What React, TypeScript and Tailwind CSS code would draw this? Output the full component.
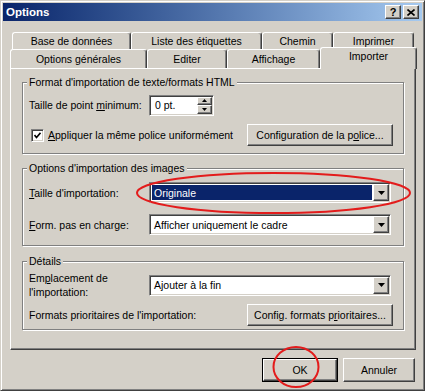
import React from "react";

const raised =
  "border border-t-white border-l-white border-r-[#404040] border-b-[#404040] shadow-[inset_-1px_-1px_0_#808080]";
const sunken =
  "border border-t-[#808080] border-l-[#808080] border-r-white border-b-white shadow-[inset_1px_1px_0_#404040,inset_-1px_-1px_0_#d4d0c8]";

function Arrow() {
  return (
    <svg width="7" height="4" viewBox="0 0 7 4">
      <polygon points="0,0 7,0 3.5,4" fill="#000" />
    </svg>
  );
}

function Select({ value, highlighted }: { value: string; highlighted?: boolean }) {
  return (
    <div className={`flex h-[21px] w-[242px] bg-white p-[1px] ${sunken}`}>
      <div
        className={`m-[1px] flex flex-1 items-center pl-[2px] ${
          highlighted ? "bg-[#0a246a] text-white" : "text-black"
        }`}
      >
        {value}
      </div>
      <div className={`flex h-full w-[16px] items-center justify-center bg-[#d4d0c8] ${raised}`}>
        <Arrow />
      </div>
    </div>
  );
}

function Button({ children, className }: { children: React.ReactNode; className?: string }) {
  return (
    <div className={`flex h-[22px] items-center justify-center bg-[#d4d0c8] text-black ${raised} ${className ?? ""}`}>
      {children}
    </div>
  );
}

function Tab({ label, w }: { label: string; w: string }) {
  return (
    <div
      className={`flex items-center justify-center rounded-t-[3px] border-l border-t border-r border-l-white border-t-white border-r-[#404040] shadow-[inset_-1px_0_0_#808080] bg-[#d4d0c8] ${w}`}
    >
      {label}
    </div>
  );
}

function Group({ legend, children, className }: { legend: string; children: React.ReactNode; className?: string }) {
  return (
    <fieldset
      className={`border border-[#808080] shadow-[1px_1px_0_#fff,inset_1px_1px_0_#fff] pl-[6px] pr-[10px] ${className ?? ""}`}
    >
      <legend className="bg-[#d4d0c8] px-[2px] -ml-[2px] leading-[12px]">{legend}</legend>
      {children}
    </fieldset>
  );
}

export default function App() {
  return (
    <div className="relative h-[391px] w-[425px] overflow-hidden font-['Liberation_Sans',Arial,sans-serif] text-[10.5px] leading-[12px] text-black">
      <div className="flex h-full w-full flex-col border border-t-[#d4d0c8] border-l-[#d4d0c8] border-r-[#404040] border-b-[#404040] bg-[#d4d0c8] p-[2px] shadow-[inset_1px_1px_0_#fff,inset_-1px_-1px_0_#808080]">
        {/* Title bar */}
        <div className="flex h-[18px] shrink-0 items-center bg-linear-to-r from-[#0a246a] to-[#a6caf0] pl-[3px] pr-[3px]">
          <span className="flex-1 text-[11.5px] font-bold text-white">Options</span>
          <div className={`mr-[2px] flex h-[14px] w-[16px] items-center justify-center bg-[#d4d0c8] text-[11px] font-bold leading-none ${raised}`}>
            ?
          </div>
          <div className={`flex h-[14px] w-[16px] items-center justify-center bg-[#d4d0c8] ${raised}`}>
            <svg width="8" height="7" viewBox="0 0 8 7">
              <path d="M0.5 0.5 L7.5 6.5 M7.5 0.5 L0.5 6.5" stroke="#000" strokeWidth="1.6" />
            </svg>
          </div>
        </div>

        {/* Tabs row 1 */}
        <div className="ml-[9px] mt-[11px] flex h-[17px] shrink-0">
          <Tab label="Base de données" w="w-[119px]" />
          <Tab label="Liste des étiquettes" w="w-[131px]" />
          <Tab label="Chemin" w="w-[71px]" />
          <Tab label="Imprimer" w="w-[81px]" />
        </div>
        {/* Tabs row 2 */}
        <div className="relative z-10 ml-[7px] -mt-[2px] flex h-[21px] shrink-0 items-end">
          <Tab label="Options générales" w="w-[137px] h-[19px]" />
          <Tab label="Editer" w="w-[80px] h-[19px]" />
          <Tab label="Affichage" w="w-[93px] h-[19px]" />
          <div className="-mb-[1px] flex h-[22px] w-[97px] items-start justify-center rounded-t-[3px] border-l border-t border-r border-l-white border-t-white border-r-[#404040] bg-[#d4d0c8] pt-[2px] shadow-[inset_-1px_0_0_#808080]">
            Importer
          </div>
        </div>

        {/* Panel */}
        <div className="ml-[7px] flex h-[282px] w-[406px] shrink-0 flex-col border border-t-white border-l-white border-r-[#404040] border-b-[#404040] px-[11px] pt-[7px] shadow-[inset_-1px_-1px_0_#808080]">
          <Group legend="Format d'importation de texte/formats HTML" className="pb-[7px] pt-[6px]">
            <div className="flex h-[22px] items-center">
              <span className="w-[120px]">
                Taille de point <u>m</u>inimum:
              </span>
              <div className={`flex h-[21px] w-[65px] bg-white p-[1px] ${sunken}`}>
                <div className="flex flex-1 items-center pl-[4px]">0 pt.</div>
                <div className="flex w-[15px] flex-col">
                  <div className={`flex flex-1 items-center justify-center bg-[#d4d0c8] ${raised}`}>
                    <svg width="5" height="3" viewBox="0 0 5 3">
                      <polygon points="2.5,0 5,3 0,3" fill="#000" />
                    </svg>
                  </div>
                  <div className={`flex flex-1 items-center justify-center bg-[#d4d0c8] ${raised}`}>
                    <svg width="5" height="3" viewBox="0 0 5 3">
                      <polygon points="0,0 5,0 2.5,3" fill="#000" />
                    </svg>
                  </div>
                </div>
              </div>
            </div>
            <div className="mt-[8px] flex h-[22px] items-center">
              <div className={`ml-[2px] flex h-[13px] w-[13px] items-center justify-center bg-white ${sunken}`}>
                <svg width="7" height="7" viewBox="0 0 7 7">
                  <path d="M0.5 3 L2.5 5.5 L6.5 0.8" stroke="#000" strokeWidth="1.6" fill="none" />
                </svg>
              </div>
              <span className="ml-[4px] flex-1">
                <u>A</u>ppliquer la même police uniformément
              </span>
              <Button className="w-[146px]">
                Configuration de la p<u>o</u>lice...
              </Button>
            </div>
          </Group>

          <Group legend="Options d'importation des images" className="mt-[8px] pb-[10px] pt-[8px]">
            <div className="flex h-[21px] items-center">
              <span className="w-[120px]">
                <u>T</u>aille d'importation:
              </span>
              <Select value="Originale" highlighted />
            </div>
            <div className="mt-[11px] flex h-[21px] items-center">
              <span className="w-[120px]">
                <u>F</u>orm. pas en charge:
              </span>
              <Select value="Afficher uniquement le cadre" />
            </div>
          </Group>

          <Group legend="Détails" className="mt-[9px] pb-[3px] pt-[4px]">
            <div className="flex h-[28px] items-center">
              <span className="w-[120px] leading-[14px]">
                Em<u>p</u>lacement de
                <br />
                l'importation:
              </span>
              <Select value="Ajouter à la fin" />
            </div>
            <div className="mt-[5px] flex h-[22px] items-center">
              <span className="flex-1">Formats prioritaires de l'importation:</span>
              <Button className="w-[146px]">
                Config. formats p<u>r</u>ioritaires...
              </Button>
            </div>
          </Group>
        </div>

        {/* Bottom buttons */}
        <div className="mt-[8px] flex justify-end gap-[5px] pr-[7px]">
          <div className="border border-black">
            <Button className="h-[22px] w-[74px]">OK</Button>
          </div>
          <Button className="h-[24px] w-[72px]">Annuler</Button>
        </div>
      </div>

      {/* Red annotation ellipses */}
      <svg className="pointer-events-none absolute left-0 top-0" width="425" height="391">
        <ellipse cx="273.5" cy="193" rx="136.5" ry="20" fill="none" stroke="#e31c1c" strokeWidth="2" />
        <ellipse cx="296" cy="367" rx="22.5" ry="20" fill="none" stroke="#e31c1c" strokeWidth="2" />
      </svg>
    </div>
  );
}
